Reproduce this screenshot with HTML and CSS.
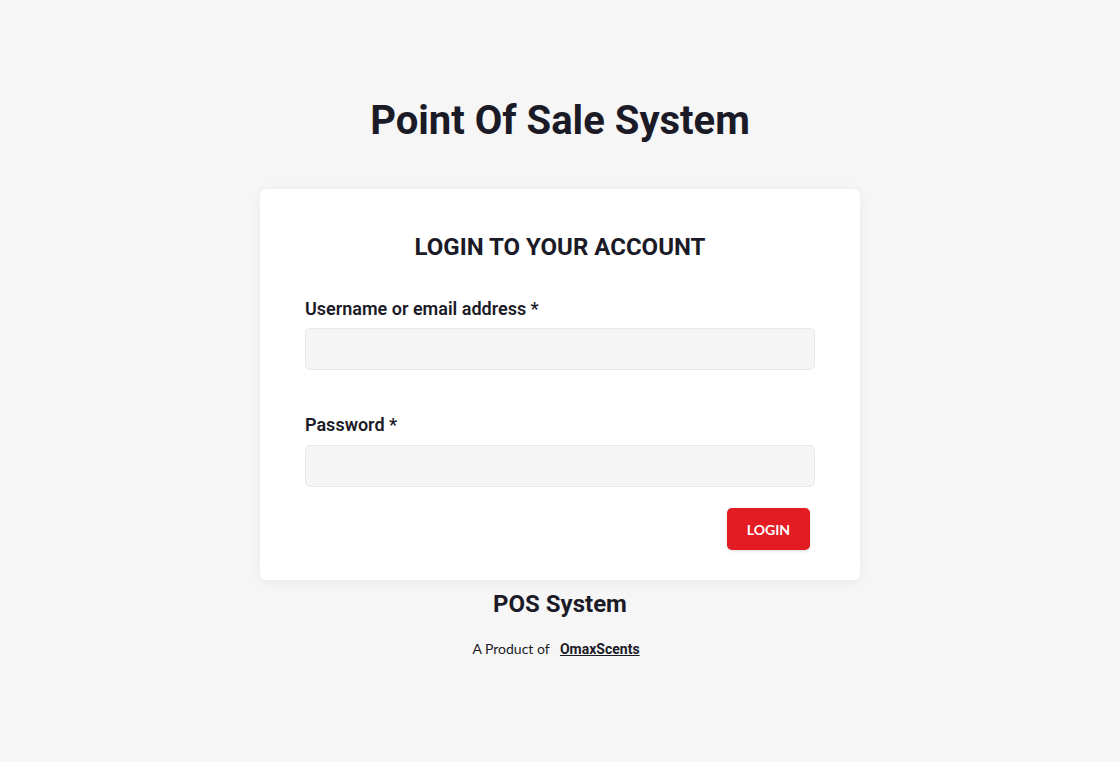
FILE: index.html
```html
<!DOCTYPE html>
<html lang="en">
<head>
    <meta charset="UTF-8">
    <meta name="viewport" content="width=device-width, initial-scale=1.0">
    <title>Point Of Sale System</title>
    <link rel="stylesheet" href="styles.css">
</head>
<body>
    <div class="page">
        <h1 class="title">Point Of Sale System</h1>

        <div class="card">
            <h2>LOGIN TO YOUR ACCOUNT</h2>
            <form class="login-form" onsubmit="return false;">
                <div class="field">
                    <label for="username">Username or email address *</label>
                    <input type="text" id="username" name="username">
                </div>
                <div class="field">
                    <label for="password">Password *</label>
                    <input type="password" id="password" name="password">
                </div>
                <div class="actions">
                    <button type="submit">LOGIN</button>
                </div>
            </form>
        </div>

        <div class="footer">
            <h3>POS System</h3>
            <p>A Product of <a href="#">OmaxScents</a></p>
        </div>
    </div>
</body>
</html>
```

FILE: styles.css
```css
body {
    font-family: Roboto, "Liberation Sans", sans-serif;
    margin: 0;
    padding: 0;
    background-color: #f6f6f6;
    color: #1b1b27;
}
.page {
    display: flex;
    flex-direction: column;
    align-items: center;
    padding-top: 97px;
}
.title {
    margin: 0;
    font-size: 40px;
    line-height: 48px;
    font-weight: 700;
}
.card {
    width: 510px;
    margin-top: 44px;
    background: white;
    border-radius: 6px;
    padding: 45px 45px 30px;
    box-shadow: 0 2px 12px rgba(0, 0, 0, 0.06);
}
.card h2 {
    margin: 0;
    text-align: center;
    font-size: 24px;
    line-height: 26px;
    font-weight: 700;
}
.login-form {
    display: flex;
    flex-direction: column;
    margin-top: 37px;
}
.field {
    display: flex;
    flex-direction: column;
    gap: 7px;
}
.field + .field {
    margin-top: 43px;
}
.field + .field label {
    margin-bottom: 1px;
}
.field label {
    font-size: 18px;
    line-height: 24px;
    font-weight: 600;
}
.field input {
    box-sizing: border-box;
    height: 42px;
    width: 100%;
    background: #f5f5f5;
    border: 1px solid #e8e8e8;
    border-radius: 5px;
    padding: 0 12px;
    font-size: 16px;
    outline: none;
}
.actions {
    display: flex;
    justify-content: flex-end;
    margin-top: 21px;
    padding-right: 5px;
}
.actions button {
    width: 83px;
    height: 42px;
    background-color: #e31b23;
    color: white;
    border: none;
    border-radius: 5px;
    font-family: Lato, "Liberation Sans", sans-serif;
    font-weight: 700;
    font-size: 14px;
    cursor: pointer;
    box-shadow: 0 1px 3px rgba(0, 0, 0, 0.15);
}
.footer {
    text-align: center;
    margin-top: 11px;
}
.footer h3 {
    margin: 0;
    font-size: 24px;
    line-height: 26px;
    font-weight: 700;
}
.footer p {
    margin: 23px 0 0;
    font-family: Lato, "Liberation Sans", sans-serif;
    font-size: 14px;
    line-height: 18px;
}
.footer a {
    font-family: Roboto, "Liberation Sans", sans-serif;
    font-weight: 700;
    color: #1b1b27;
    margin: 0 8px 0 7px;
}
```
